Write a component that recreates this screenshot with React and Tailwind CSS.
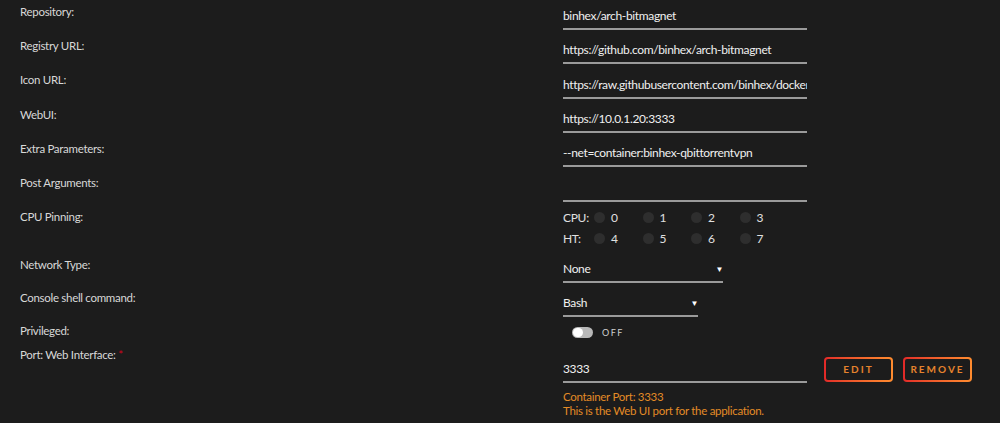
import React from 'react';

const TextRow = ({ label, value }) => (
    <div className="flex h-[34.33px]">
        <div className="w-[563px] shrink-0 pl-5 pt-[8px] leading-4 text-[#d8d8d8]">{label}</div>
        <div className="flex h-full flex-col justify-end">
            <div className="w-[244px] overflow-hidden whitespace-nowrap border-b-2 border-[#9a9a9a] pb-[4px] leading-4 text-[12px] tracking-[-0.35px] text-[#f0f0f0]">
                {value || '\u00a0'}
            </div>
        </div>
    </div>
);

const Pin = ({ n }) => (
    <div className="flex w-[48.5px] items-center gap-[6px]">
        <span className="h-[11px] w-[11px] rounded-full bg-[#2e2e2e]" />
        <span>{n}</span>
    </div>
);

const Select = ({ value, width }) => (
    <div className={`flex items-center justify-between border-b-2 border-[#9a9a9a] pb-[4px] leading-4 text-[12px] tracking-[-0.35px] text-[#f0f0f0] ${width}`}>
        <span>{value}</span>
        <span className="text-[8px] text-white">▼</span>
    </div>
);

const GradientButton = ({ children }) => (
    <div className="rounded-[4px] bg-gradient-to-r from-[#e22828] to-[#ff8c2f] p-[2px]">
        <div className="flex h-[21px] w-[65px] items-center justify-center rounded-[2px] bg-[#1c1c1c] text-[10px] font-bold tracking-[2px] text-[#e5832d]">
            {children}
        </div>
    </div>
);

const App = () => {
    return (
        <div className="h-[423px] w-[1000px] overflow-hidden bg-[#1c1c1c] text-[11.5px] tracking-[-0.3px] text-[#d8d8d8]" style={{ fontFamily: 'Lato, "Noto Sans", sans-serif' }}>
            <div className="-mt-[4.33px]">
                <TextRow label="Repository:" value="binhex/arch-bitmagnet" />
                <TextRow label="Registry URL:" value="https://github.com/binhex/arch-bitmagnet" />
                <TextRow label="Icon URL:" value="https://raw.githubusercontent.com/binhex/docker-templates/master/binhex/images/bitmagnet-icon.png" />
                <TextRow label="WebUI:" value="https://10.0.1.20:3333" />
                <TextRow label="Extra Parameters:" value="--net=container:binhex-qbittorrentvpn" />
                <TextRow label="Post Arguments:" value="" />

                {/* cpu pinning */}
                <div className="flex h-[48.33px]">
                    <div className="w-[563px] shrink-0 pl-5 pt-[7px] leading-4">CPU Pinning:</div>
                    <div className="flex flex-col gap-[5px] pt-[8px] text-[12px] leading-4 text-[#e0e0e0]">
                        <div className="flex items-center">
                            <span className="w-[31px]">CPU:</span>
                            <Pin n="0" /><Pin n="1" /><Pin n="2" /><Pin n="3" />
                        </div>
                        <div className="flex items-center">
                            <span className="w-[31px]">HT:</span>
                            <Pin n="4" /><Pin n="5" /><Pin n="6" /><Pin n="7" />
                        </div>
                    </div>
                </div>

                <div className="flex h-[33px]">
                    <div className="w-[563px] shrink-0 pl-5 pt-[7px] leading-4">Network Type:</div>
                    <div className="flex h-full flex-col justify-end">
                        <Select value="None" width="w-[160px]" />
                    </div>
                </div>

                <div className="flex h-[34px]">
                    <div className="w-[563px] shrink-0 pl-5 pt-[7px] leading-4">Console shell command:</div>
                    <div className="flex h-full flex-col justify-end">
                        <Select value="Bash" width="w-[135px]" />
                    </div>
                </div>

                <div className="flex h-[26px]">
                    <div className="w-[563px] shrink-0 pl-5 pt-[6px] leading-4">Privileged:</div>
                    <div className="flex items-center gap-[9px] pl-[9px] pt-[5px]">
                        <div className="flex h-[11px] w-[21px] items-center rounded-full bg-[#b8b8b8] p-[1px]">
                            <span className="h-[9px] w-[10px] rounded-full bg-white" />
                        </div>
                        <span className="text-[9px] tracking-[1.5px] text-[#cfcfcf]">OFF</span>
                    </div>
                </div>

                <div className="flex">
                    <div className="w-[563px] shrink-0 pl-5 pt-[4px] leading-4">
                        Port: Web Interface: <span className="text-[#d0021b]">*</span>
                    </div>
                    <div className="flex flex-col">
                        <div className="flex items-end">
                            <div className="w-[244px] border-b-2 border-[#9a9a9a] pb-[4px] pt-[18px] leading-4 text-[12px] tracking-[-0.35px] text-[#f0f0f0]">3333</div>
                            <div className="ml-[17px] flex gap-[10px] pb-[1px]">
                                <GradientButton>EDIT</GradientButton>
                                <GradientButton>REMOVE</GradientButton>
                            </div>
                        </div>
                        <div className="pt-[7px] leading-[14px] text-[#e38b26]">
                            <div>Container Port: 3333</div>
                            <div>This is the Web UI port for the application.</div>
                        </div>
                    </div>
                </div>
            </div>
        </div>
    );
};

export default App;
